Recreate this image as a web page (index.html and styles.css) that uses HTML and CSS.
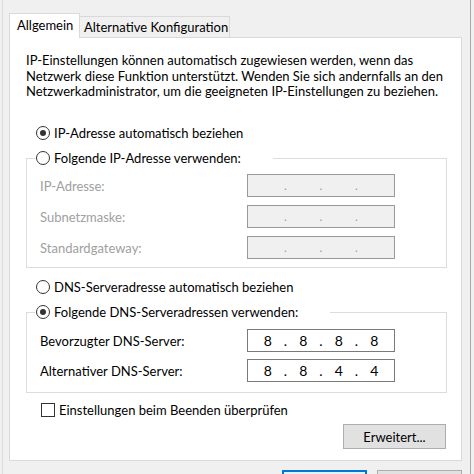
FILE: index.html
```html
<!DOCTYPE html>
<html lang="de">
<head>
    <meta charset="UTF-8">
    <meta name="viewport" content="width=device-width, initial-scale=1.0">
    <title>Eigenschaften von Internetprotokoll, Version 4 (TCP/IPv4)</title>
    <link rel="stylesheet" href="styles.css">
</head>
<body>
    <div class="window">
        <div class="tabs">
            <div class="tab active">Allgemein</div>
            <div class="tab">Alternative Konfiguration</div>
        </div>

        <div class="panel">
            <p class="desc">IP-Einstellungen können automatisch zugewiesen werden, wenn das<br>Netzwerk diese Funktion unterstützt. Wenden Sie sich andernfalls an den<br>Netzwerkadministrator, um die geeigneten IP-Einstellungen zu beziehen.</p>

            <div class="option ip-auto"><span class="radio checked"></span>IP-Adresse automatisch beziehen</div>
            <fieldset class="group ip-group">
                <legend><span class="option"><span class="radio"></span>Folgende IP-Adresse verwenden:</span></legend>
                <div class="field disabled">
                    <span>IP-Adresse:</span>
                    <div class="ipbox"><span class="seg"></span><span class="dot">.</span><span class="seg"></span><span class="dot">.</span><span class="seg"></span><span class="dot">.</span><span class="seg"></span></div>
                </div>
                <div class="field disabled">
                    <span>Subnetzmaske:</span>
                    <div class="ipbox"><span class="seg"></span><span class="dot">.</span><span class="seg"></span><span class="dot">.</span><span class="seg"></span><span class="dot">.</span><span class="seg"></span></div>
                </div>
                <div class="field disabled">
                    <span>Standardgateway:</span>
                    <div class="ipbox"><span class="seg"></span><span class="dot">.</span><span class="seg"></span><span class="dot">.</span><span class="seg"></span><span class="dot">.</span><span class="seg"></span></div>
                </div>
            </fieldset>

            <div class="option dns-auto"><span class="radio"></span>DNS-Serveradresse automatisch beziehen</div>
            <fieldset class="group dns-group">
                <legend><span class="option"><span class="radio checked"></span>Folgende DNS-Serveradressen verwenden:</span></legend>
                <div class="field">
                    <span>Bevorzugter DNS-Server:</span>
                    <div class="ipbox"><span class="seg">8</span><span class="dot">.</span><span class="seg">8</span><span class="dot">.</span><span class="seg">8</span><span class="dot">.</span><span class="seg">8</span></div>
                </div>
                <div class="field">
                    <span>Alternativer DNS-Server:</span>
                    <div class="ipbox"><span class="seg">8</span><span class="dot">.</span><span class="seg">8</span><span class="dot">.</span><span class="seg">4</span><span class="dot">.</span><span class="seg">4</span></div>
                </div>
            </fieldset>

            <div class="option check-row"><span class="checkbox"></span>Einstellungen beim Beenden überprüfen</div>

            <div class="actions">
                <div class="btn advanced">Erweitert...</div>
            </div>
        </div>

        <div class="footer">
            <div class="btn primary"></div>
            <div class="btn"></div>
        </div>
    </div>
</body>
</html>
```

FILE: styles.css
```css
* { box-sizing: border-box; }
html, body { margin: 0; }
body { width: 474px; height: 474px; overflow: hidden; background: #f0f0f0; font-family: Lato, "Open Sans", sans-serif; font-size: 13px; color: #000; }

.window { width: 469px; height: 474px; margin-left: 2px; padding: 13px 0 0 6px; border-left: 1px solid #dcdcdc; border-right: 1px solid #a8a8a8; }

/* tabs */
.tabs { display: flex; align-items: flex-end; height: 24px; }
.tab { height: 21px; width: 150px; padding-left: 4px; line-height: 20px; background: #f0f0f0; border: 1px solid #d9d9d9; border-bottom: none; border-left: none; white-space: nowrap; }
.tab.active { height: 25px; width: 71px; padding-left: 7px; line-height: 23px; margin-bottom: -1px; background: #fff; border-left: 1px solid #d9d9d9; position: relative; z-index: 1; }

/* page */
.panel { width: 453px; height: 424px; padding: 0 14px 0 16px; background: #fff; border: 1px solid #d9d9d9; }
.desc { margin: 15px 0 0; height: 47px; line-height: 15.5px; white-space: nowrap; }

.option { display: flex; align-items: center; height: 20px; white-space: nowrap; }
.ip-auto { margin-top: 23px; }
.dns-auto { margin-top: 9px; }
.ip-auto .radio, .dns-auto .radio { margin-left: 10px; }

.radio { width: 14px; height: 14px; margin-right: 4px; border: 1px solid #333; border-radius: 50%; display: flex; align-items: center; justify-content: center; flex: none; }
.radio.checked::after { content: ""; width: 6px; height: 6px; border-radius: 50%; background: #333; }

.checkbox { width: 14px; height: 14px; margin: 0 4px 0 15px; border: 1px solid #333; flex: none; }
.check-row { margin-top: 7px; }

/* group boxes */
.group { margin: 5px 0 0; min-width: 0; border: 1px solid #dcdcdc; padding: 6px 13px 8px; }
.group legend { margin-left: -5px; padding: 0 32px 0 1px; }
.dns-group { padding-top: 7px; padding-bottom: 10px; }

.field { display: grid; grid-template-columns: 207px 148px; align-items: center; height: 23px; }
.field + .field { margin-top: 8px; }
.dns-group .field + .field { margin-top: 7px; }
.field.disabled { color: #a0a0a0; }

.ipbox { display: flex; height: 23px; padding: 0 2px; align-items: center; background: #fff; border: 1px solid #7a7a7a; font-size: 14px; }
.disabled .ipbox { background: #f0f0f0; border-color: #999; color: #999; font-size: 12px; }
.seg { width: 36px; text-align: center; }
.dot { width: 0; display: flex; justify-content: center; }

/* buttons */
.actions { display: flex; justify-content: flex-end; margin-top: 4px; padding-right: 1px; }
.btn { height: 25px; display: flex; align-items: center; justify-content: center; background: #e1e1e1; border: 1px solid #adadad; }
.advanced { width: 103px; }

.footer { display: flex; justify-content: flex-end; gap: 10px; width: 453px; margin-top: 9px; }
.footer .btn { width: 85px; height: 23px; }
.footer .primary { border: 2px solid #0078d7; background: #e5f1fb; }
```
